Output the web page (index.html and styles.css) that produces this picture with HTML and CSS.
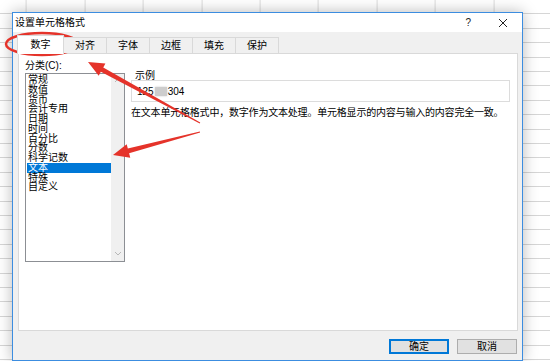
FILE: index.html
```html
<!DOCTYPE html>
<html lang="zh-CN">
<head>
    <meta charset="UTF-8">
    <title>设置单元格格式</title>
    <link rel="stylesheet" href="styles.css">
</head>
<body>
    <div class="dialog">
        <div class="titlebar">
            <span class="title">设置单元格格式</span>
            <span class="help">?</span>
            <svg class="close" width="10" height="10" viewBox="0 0 10 10">
                <path d="M1 1 L9 9 M9 1 L1 9" stroke="#222" stroke-width="1" fill="none"/>
            </svg>
        </div>

        <div class="content">
            <div class="tabs">
                <div class="tab active">数字</div>
                <div class="tab">对齐</div>
                <div class="tab">字体</div>
                <div class="tab">边框</div>
                <div class="tab">填充</div>
                <div class="tab">保护</div>
            </div>

            <div class="panel">
                <div class="category">
                    <div class="label">分类(C):</div>
                    <div class="listbox">
                        <ul class="items">
                            <li>常规</li>
                            <li>数值</li>
                            <li>货币</li>
                            <li>会计专用</li>
                            <li>日期</li>
                            <li>时间</li>
                            <li>百分比</li>
                            <li>分数</li>
                            <li>科学记数</li>
                            <li class="selected">文本</li>
                            <li>特殊</li>
                            <li>自定义</li>
                        </ul>
                        <div class="scrollbar">
                            <svg width="8" height="5" viewBox="0 0 8 5"><path d="M1 4 L4 1 L7 4" stroke="#b8b8b8" fill="none"/></svg>
                            <svg width="8" height="5" viewBox="0 0 8 5"><path d="M1 1 L4 4 L7 1" stroke="#b8b8b8" fill="none"/></svg>
                        </div>
                    </div>
                </div>

                <div class="detail">
                    <div class="sample-label">示例</div>
                    <div class="sample-box">
                        <span>125</span><span class="blur"></span><span>304</span>
                    </div>
                    <p class="desc">在文本单元格格式中，数字作为文本处理。单元格显示的内容与输入的内容完全一致。</p>
                </div>
            </div>

            <div class="footer">
                <button class="btn primary">确定</button>
                <button class="btn">取消</button>
            </div>
        </div>
    </div>

    <!-- annotation marks drawn over the screenshot -->
    <svg class="marks" width="550" height="361" viewBox="0 0 550 361">
        <ellipse cx="42" cy="44" rx="36" ry="11" fill="none" stroke="#e5332a" stroke-width="2.5"/>
        <polygon fill="#e5332a" points="88,62 105.4,63.5 103.25,67.45 200.24,122.56 199.76,123.44 100.85,71.85 98.7,75.8"/>
        <polygon fill="#e5332a" points="113,155 126.68,144.13 127.83,148.48 199.87,131.52 200.13,132.48 129.11,153.32 130.26,157.67"/>
    </svg>
</body>
</html>
```

FILE: styles.css
```css
html, body {
    height: 100%;
}

body {
    margin: 0;
    position: relative;
    overflow: hidden;
    font-family: "Liberation Sans", "Noto Sans CJK SC", sans-serif;
    font-size: 10px;
    color: #000;
    background-color: #fff;
    /* spreadsheet grid behind the dialog */
    background-image:
        repeating-linear-gradient(to bottom, transparent 0 13.4px, #d6d6d6 13.4px 14.4px),
        repeating-linear-gradient(to right, transparent 0 57.4px, #dcdcdc 57.4px 58.4px);
    background-position: 0 0, -31.4px 0;
}

.dialog {
    margin: 12px 0 0 12px;
    width: 509px;
    height: 347px;
    border: 1px solid #3c8de0;
    background: #f0f0f0;
    box-shadow: 0 0 14px rgba(0, 0, 0, 0.28);
    display: flex;
    flex-direction: column;
}

.titlebar {
    height: 19px;
    background: #fff;
    display: flex;
    align-items: center;
    padding-left: 2px;
}

.title {
    flex: 1;
    line-height: 10px;
    padding-top: 1px;
}

.help {
    font-size: 10px;
    line-height: 10px;
    margin-right: 27px;
    color: #222;
}

.close {
    margin-right: 14px;
}

.content {
    flex: 1;
    display: flex;
    flex-direction: column;
}

.tabs {
    display: flex;
    align-items: flex-end;
    height: 21px;
    margin-left: 4px;
    position: relative;
    z-index: 1;
}

.tab {
    width: 42px;
    height: 15px;
    line-height: 15px;
    text-align: center;
    border: 1px solid #d9d9d9;
    border-left: none;
    border-bottom: none;
    background: #f0f0f0;
}

.tab.active {
    width: 45px;
    height: 18px;
    line-height: 18px;
    background: #fff;
    border-left: 1px solid #d9d9d9;
    margin-bottom: -1px;
}

.panel {
    margin-left: 5px;
    height: 276px;
    background: #fff;
    border: 1px solid #d9d9d9;
    display: flex;
    gap: 6px;
    padding: 0 6px;
    box-sizing: content-box;
    width: 486px;
}

.category {
    padding-top: 7px;
}

.label {
    line-height: 10px;
    margin-bottom: 2px;
}

.listbox {
    width: 98px;
    height: 187px;
    border: 1px solid #8c8f94;
    display: flex;
}

.items {
    list-style: none;
    margin: 0;
    padding: 1px 0 0 1px;
    flex: 1;
}

.items li {
    height: 9.75px;
    line-height: 9.75px;
    padding-left: 1px;
    white-space: nowrap;
}

.items li.selected {
    background: #0078d7;
    color: #fff;
}

.scrollbar {
    width: 13px;
    background: #f0f0f0;
    display: flex;
    flex-direction: column;
    justify-content: space-between;
    align-items: center;
    padding: 4px 0 5px;
}

.detail {
    margin-top: 17px;
    width: 379px;
}

.sample-label {
    line-height: 10px;
    padding-left: 4px;
    margin-bottom: -1px;
}

.sample-box {
    height: 20px;
    border: 1px solid #dcdcdc;
    display: flex;
    align-items: center;
    padding-left: 5px;
    font-family: "Liberation Sans", sans-serif;
}

.blur {
    display: inline-block;
    width: 12px;
    height: 9px;
    margin: 0 1px;
    background: #cdcdcd;
    box-shadow: 0 0 2px #cdcdcd;
}

.desc {
    margin: 6px 0 0;
    line-height: 10px;
    letter-spacing: -0.2px;
    white-space: nowrap;
}

.footer {
    display: flex;
    justify-content: flex-end;
    gap: 8px;
    padding: 8px 5px 0 0;
}

.btn {
    width: 60px;
    height: 15px;
    padding: 0;
    font-family: "Liberation Sans", "Noto Sans CJK SC", sans-serif;
    font-size: 10px;
    line-height: 11px;
    color: #000;
    background: #e1e1e1;
    border: 1px solid #adadad;
}

.btn.primary {
    border: 2px solid #0078d7;
}

.marks {
    position: absolute;
    left: 0;
    top: 0;
    pointer-events: none;
}
```
